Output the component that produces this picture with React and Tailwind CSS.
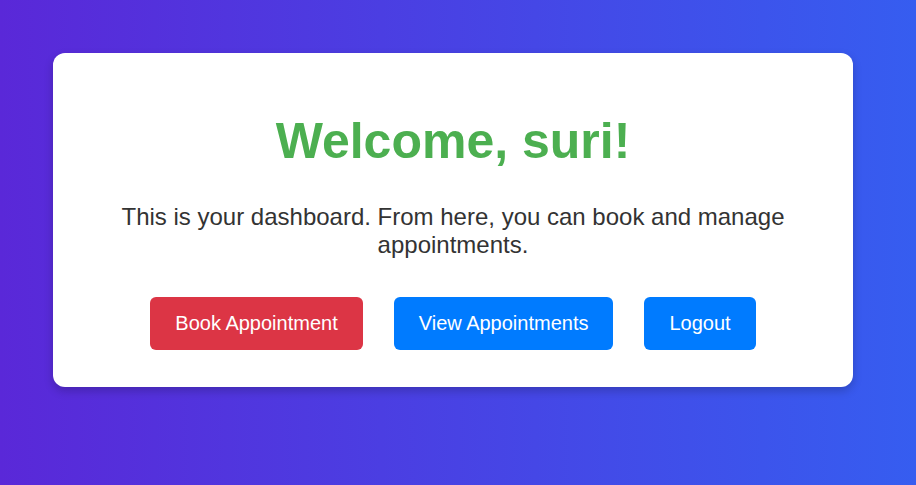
const actions = [
  { label: "Book Appointment", color: "bg-[#dc3545]" },
  { label: "View Appointments", color: "bg-[#007bff]" },
  { label: "Logout", color: "bg-[#007bff]" },
];

export default function App() {
  return (
    <div className="min-h-screen bg-linear-to-r/srgb from-[#5a28d8] to-[#365df0] py-[53px] pr-[63px] pl-[53px] font-['Liberation_Sans',Arial,sans-serif]">
      <main className="mx-auto max-w-[800px] rounded-xl bg-white px-[38px] pt-[58px] pb-[37px] text-center shadow-[0_4px_10px_rgba(0,0,0,0.2)]">
        <h1 className="text-[50px] leading-[60px] font-bold text-[#4caf50]">Welcome, suri!</h1>
        <p className="mt-8 text-2xl leading-7 text-[#333]">
          This is your dashboard. From here, you can book and manage appointments.
        </p>
        <div className="mt-[38px] flex flex-wrap justify-center gap-[31px]">
          {actions.map(({ label, color }) => (
            <button
              key={label}
              type="button"
              className={`cursor-pointer rounded-md px-[25px] pt-3 pb-[13px] text-xl leading-7 text-white ${color}`}
            >
              {label}
            </button>
          ))}
        </div>
      </main>
    </div>
  );
}
